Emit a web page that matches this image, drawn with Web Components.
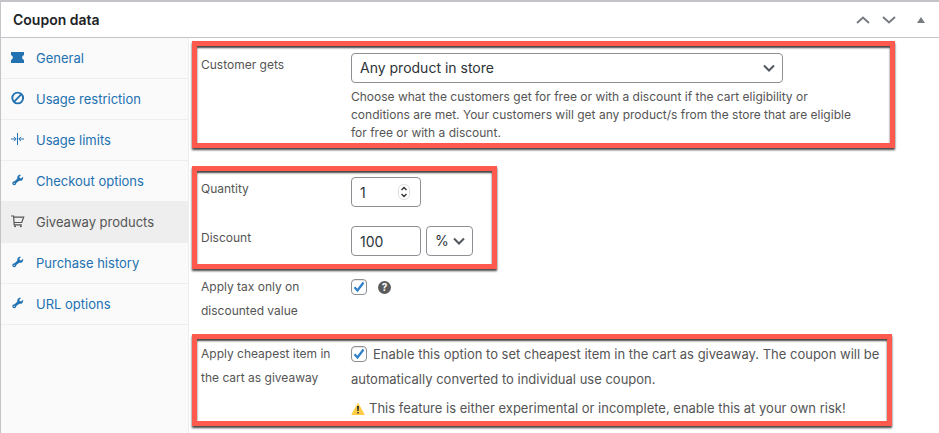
<!DOCTYPE html>
<html lang="en">
<head>
<meta charset="utf-8">
<title>Coupon data</title>
<style>
html, body { margin: 0; min-height: 100%; background: #fff; }
body { font: 13px/18px Inter, "Liberation Sans", sans-serif; color: #555; min-height: 100vh; display: flex; }
</style>
</head>
<body>
<coupon-panel></coupon-panel>
<script>
const define = (name, html, setup) => {
  const t = document.createElement('template');
  t.innerHTML = html;
  customElements.define(name, class extends HTMLElement {
    constructor() {
      super();
      this.attachShadow({ mode: 'open' }).append(t.content.cloneNode(true));
    }
    connectedCallback() { if (setup) setup(this, this.shadowRoot); }
  });
};

const icons = {
  ticket: '<path fill="currentColor" d="M0 2h13v3a2.6 2.6 0 0 0 0 5v3H0v-3a2.6 2.6 0 0 0 0-5z"/>',
  no: '<g fill="none" stroke="currentColor" stroke-width="1.9"><circle cx="6.7" cy="7" r="5.4"/><path d="M3 10.8 10.4 3.2"/></g>',
  limit: '<g fill="none" stroke="currentColor" stroke-width="1"><path d="M6.5 1v12M0 7h5M13 7H8M3 4.8 5.2 7 3 9.2M10 4.8 7.8 7 10 9.2"/></g>',
  wrench: '<path fill="currentColor" d="M12 3.800 10.200 5.400 8.700 5 8.400 3.600 10.100 1.900C8.700 1.500 7.200 2 6.600 3.300c-.4.800-.4 1.500-.2 2.200L3.600 8.200C2.400 8.100 1.300 9 1.300 10.200s.9 2 2 2c1.200 0 2.100-1 2-2.200l.3-.2 2.700-2.100c1.100.3 2.300.1 3-.7.8-.9 1.100-2.100.7-3.200zM3.200 10.900a.6.6 0 1 1 0-1.200.6.6 0 0 1 0 1.200z"/>',
  cart: '<g fill="none" stroke="currentColor" stroke-width="1.200"><path d="M0 2h2.600l.6 8.800h7.600M2.700 3.200h10L10.700 8.500H3.100"/></g><circle cx="4" cy="12.300" r="1" fill="currentColor"/><circle cx="9.800" cy="12.300" r="1" fill="currentColor"/>'
};

define('nav-tab', `
<style>
:host { display: block; border-bottom: 1px solid #eee; }
:host([active]) { background: #eee; --tab: #555; }
a { display: flex; align-items: center; gap: 11px; height: 40px; padding-left: 10px; font-size: 13px; color: var(--tab, #2271b1); text-decoration: none; }
svg { width: 14px; height: 14px; flex: none; margin-bottom: 2px; }
</style>
<a href="#"><svg viewBox="0 0 14 14" aria-hidden="true"></svg><span><slot></slot></span></a>`,
(el, r) => {
  r.querySelector('svg').innerHTML = icons[el.getAttribute('icon')];
  if (el.hasAttribute('active')) r.querySelector('a').setAttribute('aria-current', 'page');
});

define('panel-header', `
<style>
:host { display: flex; align-items: center; justify-content: space-between; height: 35px; padding: 0 7px 0 12px; border-bottom: 1px solid #c3c4c7; color: #1d2327; }
h2 { margin: 0; font-size: 14px; line-height: 20px; font-weight: 600; }
div { display: flex; }
button { border: 0; background: none; padding: 0; width: 26px; height: 30px; display: grid; place-items: center; color: #787c82; }
button:last-child { width: 22px; margin-left: 8px; }
svg { fill: none; stroke: currentColor; stroke-width: 2; }
</style>
<h2><slot></slot></h2>
<div>
<button aria-label="Move up"><svg width="14" height="8" viewBox="0 0 14 8"><path d="M1 7l6-5.500L13 7"/></svg></button>
<button aria-label="Move down"><svg width="14" height="8" viewBox="0 0 14 8"><path d="M1 1l6 5.500L13 1"/></svg></button>
<button aria-label="Toggle panel"><svg width="8" height="8" viewBox="0 0 8 8"><path fill="currentColor" stroke="none" d="M4 1l4 6H0z"/></svg></button>
</div>`);

define('highlight-box', `
<style>
:host { display: flex; flex-direction: column; border: 5px solid #ff5a4d; box-shadow: 0 2px 2px #444, inset 0 2px 2px #444; box-sizing: border-box; padding: 0 4px; }
</style>
<slot></slot>`);

const field = `
:host { display: grid; grid-template-columns: 150px minmax(0, 1fr); align-items: start; }
.label { font-size: 12px; line-height: 24px; }
.row { display: flex; gap: 5px; }
input, select { box-sizing: border-box; margin: 0; font: 14px/28px Inter, "Liberation Sans", sans-serif; color: #2c3338; background: #fff; border: 1px solid #8c8f94; border-radius: 4px; height: 30px; padding: 0 8px; appearance: none; }
input[type=checkbox] { width: 16px; height: 16px; padding: 0; vertical-align: middle; background: #fff url("data:image/svg+xml,%3Csvg xmlns='http://www.w3.org/2000/svg' viewBox='0 0 14 14'%3E%3Cpath fill='none' stroke='%232d7fc8' stroke-width='2.200' d='M2.500 7.300 5.500 10.500 11.500 2.500'/%3E%3C/svg%3E") center / 14px 14px no-repeat; box-shadow: inset 0 1px 1px #0000001a; }
input[type=number] { width: 70px; appearance: textfield; }
input::-webkit-inner-spin-button { appearance: none; margin: 0; }
select { background: #fff url("data:image/svg+xml,%3Csvg xmlns='http://www.w3.org/2000/svg' viewBox='0 0 12 8'%3E%3Cpath fill='none' stroke='%2350575e' stroke-width='2' d='M1 1.500 6 6.500 11 1.500'/%3E%3C/svg%3E") right 7px center / 12px 8px no-repeat; }
`;

define('reward-field', `
<style>${field}
:host { padding: 7px 0 1px; }
select { width: 100%; max-width: 432px; display: block; }
p { margin: 5px 0 0; font-size: 12px; line-height: 18px; max-width: 515px; }
</style>
<label class="label" for="reward">Customer gets</label>
<div><select id="reward"><option>Any product in store</option></select><p><slot></slot></p></div>`);

define('quantity-field', `
<style>${field}
:host { padding: 6px 0 9px; }
.number { position: relative; }
.number svg { position: absolute; right: 11px; top: 7px; }
</style>
<label class="label" for="quantity">Quantity</label>
<div class="row"><div class="number"><input id="quantity" type="number" value="1"><svg width="12" height="16" viewBox="0 0 12 16" fill="none"><rect x=".5" y=".5" width="11" height="15" rx="5" stroke="#ddd"/><path d="M3.500 6 6 3.500 8.500 6M3.500 10 6 12.500 8.500 10" stroke="#333" stroke-width="1.400"/></svg></div></div>`);

define('discount-field', `
<style>${field}
:host { padding: 10px 0 8px; }
input[type=text] { width: 70px; }
select { width: 47px; }
</style>
<label class="label" for="discount">Discount</label>
<div class="row"><input id="discount" type="text" value="100"><select aria-label="Discount type"><option>%</option></select></div>`);

define('tax-field', `
<style>${field}
:host { padding: 6px 9px 11px; }
.row { height: 24px; align-items: center; gap: 11px; }
label { max-width: 132px; }
.help { border: 0; padding: 0; width: 13px; height: 13px; border-radius: 50%; background: #5b5b5b; color: #fff; font: 700 10px/13px Inter, sans-serif; text-align: center; }
</style>
<label class="label" for="tax">Apply tax only on discounted value</label>
<div class="row"><input id="tax" type="checkbox" checked><button class="help" aria-label="Help">?</button></div>`);

define('cheapest-field', `
<style>${field}
:host { padding: 3px 0 0; }
label { max-width: 138px; }
p { margin: 0; font-size: 13px; line-height: 25px; }
p + p { margin-top: 4px; display: flex; align-items: center; gap: 4px; }
p input[type=checkbox] { margin: -2px 6px 0 0; }
svg { flex: none; }
</style>
<label class="label" for="cheapest">Apply cheapest item in the cart as giveaway</label>
<div><p><input id="cheapest" type="checkbox" checked><slot></slot></p>
<p><svg width="14" height="14" viewBox="0 0 14 14" aria-hidden="true"><path fill="#fc4" stroke="#fc4" stroke-width="1" stroke-linejoin="round" d="M7 1.500 13.200 12.500H.8z"/><path fill="#333" d="M6 4h2l-.3 5H6.300zM6.200 10h1.600v1.600H6.200z"/></svg><slot name="warning"></slot></p></div>`);

define('coupon-panel', `
<style>
:host { flex: 1; min-width: 0; display: flex; flex-direction: column; border-top: 2px solid #c3c4c7; border-left: 1px solid #c3c4c7; }
.body { flex: 1; display: flex; }
nav { width: 187px; flex: none; background: #fafafa; border-right: 1px solid #eee; }
main { flex: 1; min-width: 0; padding: 3px 0 7px 3px; }
.reward { margin-right: 44px; min-height: 107px; }
.discount { margin-top: 18px; width: fit-content; padding-right: 19px; }
.cheapest { margin-right: 47px; }
</style>
<panel-header>Coupon data</panel-header>
<div class="body">
<nav>
<nav-tab icon="ticket">General</nav-tab>
<nav-tab icon="no">Usage restriction</nav-tab>
<nav-tab icon="limit">Usage limits</nav-tab>
<nav-tab icon="wrench">Checkout options</nav-tab>
<nav-tab icon="cart" active>Giveaway products</nav-tab>
<nav-tab icon="wrench">Purchase history</nav-tab>
<nav-tab icon="wrench">URL options</nav-tab>
</nav>
<main>
<highlight-box class="reward"><reward-field>Choose what the customers get for free or with a discount if the cart eligibility or conditions are met. Your customers will get any product/s from the store that are eligible for free or with a discount.</reward-field></highlight-box>
<highlight-box class="discount"><quantity-field></quantity-field><discount-field></discount-field></highlight-box>
<tax-field></tax-field>
<highlight-box class="cheapest"><cheapest-field>Enable this option to set cheapest item in the cart as giveaway. The coupon will be automatically converted to individual use coupon.<span slot="warning">This feature is either experimental or incomplete, enable this at your own risk!</span></cheapest-field></highlight-box>
</main>
</div>`);
</script>
</body>
</html>
